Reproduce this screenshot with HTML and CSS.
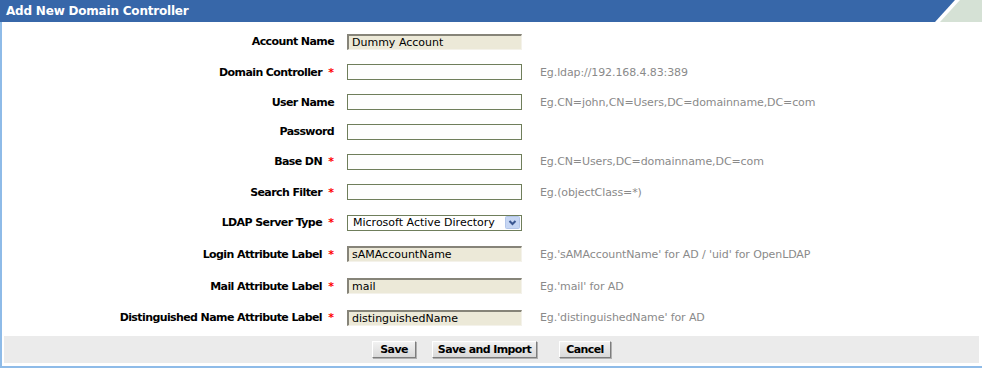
FILE: index.html
```html
<!DOCTYPE html>
<html lang="en">
<head>
  <meta charset="UTF-8">
  <title>Add New Domain Controller</title>
  <link rel="stylesheet" href="styles.css">
</head>
<body>
  <div class="panel">
    <div class="panel-head">
      <h1>Add New Domain Controller</h1>
      <svg class="corner" width="47" height="22" viewBox="0 0 47 22">
        <polygon points="0,0 20,0 0,22" fill="#3767a9"/>
        <polygon points="25,0 47,0 47,22 5,22" fill="#d5e1d5"/>
      </svg>
    </div>

    <form class="dc-form">
      <label class="lbl">Account Name</label>
      <input class="fld ro" type="text" value="Dummy Account" readonly>
      <span class="hint"></span>

      <label class="lbl">Domain Controller <em>*</em></label>
      <input class="fld" type="text">
      <span class="hint">Eg.ldap://192.168.4.83:389</span>

      <label class="lbl">User Name</label>
      <input class="fld" type="text">
      <span class="hint">Eg.CN=john,CN=Users,DC=domainname,DC=com</span>

      <label class="lbl">Password</label>
      <input class="fld" type="password">
      <span class="hint"></span>

      <label class="lbl">Base DN <em>*</em></label>
      <input class="fld" type="text">
      <span class="hint">Eg.CN=Users,DC=domainname,DC=com</span>

      <label class="lbl">Search Filter <em>*</em></label>
      <input class="fld" type="text">
      <span class="hint">Eg.(objectClass=*)</span>

      <label class="lbl">LDAP Server Type <em>*</em></label>
      <span class="select-wrap">
        <select class="fld sel">
          <option>Microsoft Active Directory</option>
          <option>OpenLDAP</option>
        </select>
        <svg class="sel-btn" width="15" height="13" viewBox="0 0 15 13">
          <rect x="0.5" y="0.5" width="14" height="12" rx="1" fill="#c6d6f3" stroke="#b3c6ea"/>
          <polyline points="4.5,5 7.5,8 10.5,5" fill="none" stroke="#3b5891" stroke-width="2"/>
        </svg>
      </span>
      <span class="hint"></span>

      <label class="lbl">Login Attribute Label <em>*</em></label>
      <input class="fld ro" type="text" value="sAMAccountName" readonly>
      <span class="hint">Eg.'sAMAccountName' for AD / 'uid' for OpenLDAP</span>

      <label class="lbl">Mail Attribute Label <em>*</em></label>
      <input class="fld ro" type="text" value="mail" readonly>
      <span class="hint">Eg.'mail' for AD</span>

      <label class="lbl">Distinguished Name Attribute Label <em>*</em></label>
      <input class="fld ro" type="text" value="distinguishedName" readonly>
      <span class="hint">Eg.'distinguishedName' for AD</span>
    </form>

    <div class="actions">
      <button type="button" class="btn btn-save">Save</button>
      <button type="button" class="btn btn-import">Save and Import</button>
      <button type="button" class="btn btn-cancel">Cancel</button>
    </div>
  </div>
</body>
</html>
```

FILE: styles.css
```css
* {
  margin: 0;
  padding: 0;
  box-sizing: border-box;
}

body {
  font-family: "DejaVu Sans", Verdana, sans-serif;
  font-size: 11px;
  color: #000;
  background: #fff;
}

.panel {
  width: 982px;
  height: 368px;
  border-left: 2px solid #8ebbe8;
  border-bottom: 2px solid #8ebbe8;
  display: flex;
  flex-direction: column;
}

.panel-head {
  height: 22px;
  margin-left: -2px;
  display: flex;
}

.panel-head h1 {
  flex: 1;
  background: #3767a9;
  color: #fff;
  font-size: 12px;
  font-weight: bold;
  letter-spacing: -0.2px;
  line-height: 22px;
  padding-left: 6px;
}

.corner {
  display: block;
}

.dc-form {
  display: grid;
  grid-template-columns: 334px 175px 1fr;
  grid-template-rows: 31px 30px 30px 29px 31px 30px 31px 32px 32px 31px;
  column-gap: 11px;
  align-items: center;
  padding-top: 4px;
}

.lbl {
  text-align: right;
  font-weight: bold;
  letter-spacing: -0.6px;
  white-space: nowrap;
  padding-right: 2px;
}

.lbl em {
  font-style: normal;
  color: #f00;
  margin-left: 3px;
  letter-spacing: 0;
}

.fld {
  width: 175px;
  height: 16px;
  border: 1px solid #6f7e5b;
  background: #fdfdfd;
  font-family: inherit;
  font-size: 11px;
  padding: 0 4px;
  color: #000;
}

.fld.ro {
  background: #ece9d8;
  border: none;
  border-top: 2px solid #868479;
  border-left: 2px solid #868479;
  border-right: 1px solid #f4f2ea;
  border-bottom: 1px solid #f4f2ea;
  padding-left: 3px;
}

.hint {
  color: #8a8a8a;
  padding-left: 7px;
  letter-spacing: -0.1px;
  white-space: nowrap;
}

.select-wrap {
  position: relative;
  width: 175px;
  height: 16px;
}

.sel {
  appearance: none;
  -webkit-appearance: none;
  background: #fff;
  padding-left: 5px;
  outline: none;
}

.sel-btn {
  position: absolute;
  right: 2px;
  top: 1px;
}

.actions {
  margin: 3px 3px 0 2px;
  height: 27px;
  background: #ebebeb;
  display: flex;
  justify-content: center;
  align-items: center;
  gap: 16px;
}

.btn {
  height: 17px;
  font-family: inherit;
  font-size: 11px;
  font-weight: bold;
  letter-spacing: -0.6px;
  padding: 0 6px;
  background: linear-gradient(#f2f2f2, #d9d9d9);
  border: 1px solid;
  border-color: #fff #7d7d7d #7d7d7d #fff;
  box-shadow: 1px 1px 0 #b0b0b0;
  color: #000;
}

.btn-save {
  padding: 0 7px;
}

.btn-import {
  padding: 0 5px;
}

.btn-cancel {
  margin-left: 6px;
  padding: 0 6px;
}
```
